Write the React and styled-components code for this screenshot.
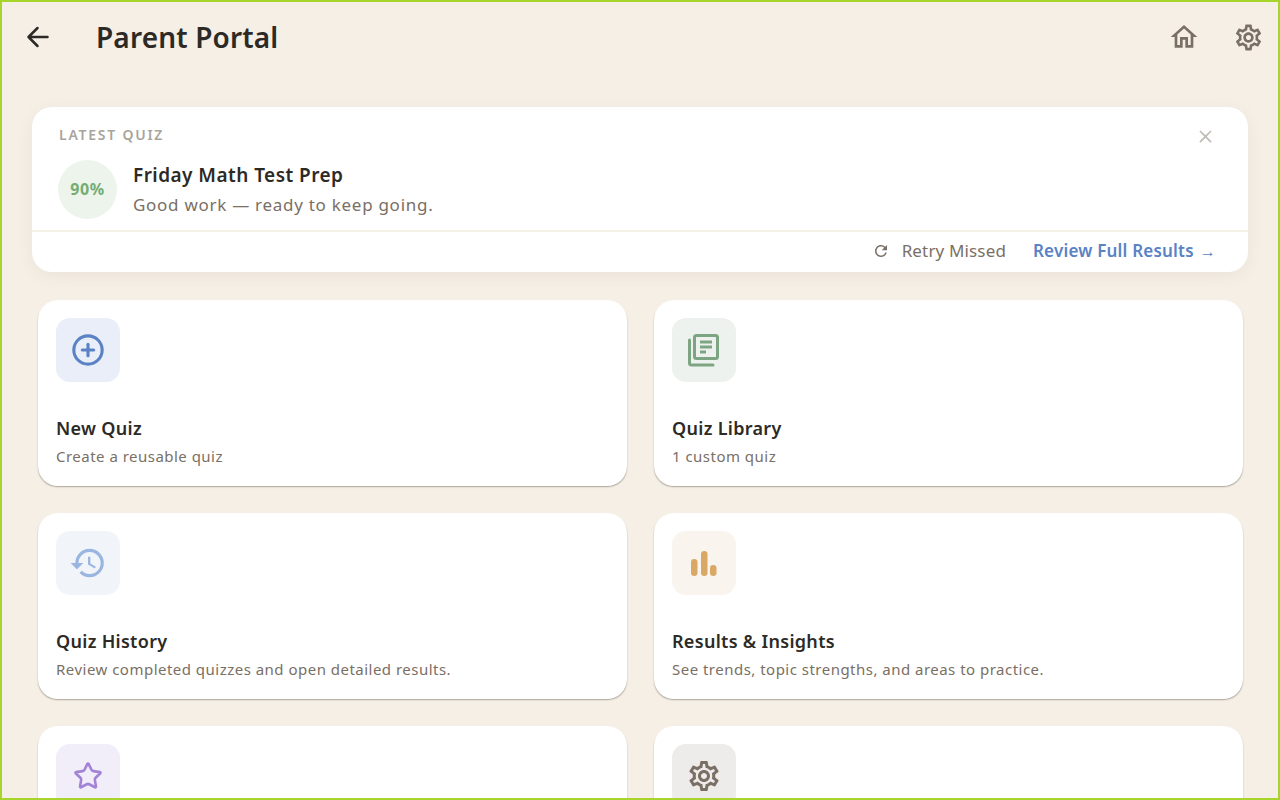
import styled, { createGlobalStyle } from 'styled-components'
import { CirclePlus, Star } from 'lucide-react'
import { MdOutlineHome, MdOutlineSettings, MdClose, MdRefresh, MdHistory } from 'react-icons/md'

const GlobalStyle = createGlobalStyle`
  html, body {
    margin: 0;
    padding: 0;
    background: #f5efe6;
    font-family: 'Noto Sans', 'Lato', sans-serif;
  }
`

const Frame = styled.div`
  box-sizing: border-box;
  height: 800px;
  border: 2px solid #a8d52b;
  background: #f5efe6;
  overflow: hidden;
`

const Header = styled.header`
  display: flex;
  align-items: center;
  height: 70px;
  padding: 0 14px 0 20px;
`

const HeaderButton = styled.button`
  display: flex;
  align-items: center;
  justify-content: center;
  width: 32px;
  height: 32px;
  padding: 0;
  border: 0;
  background: none;
  color: ${(props) => props.$color || '#7a6f65'};
  margin-left: ${(props) => props.$gap || 0}px;
`

const Title = styled.h1`
  flex: 1;
  margin: 0 0 0 42px;
  font-size: 28px;
  font-weight: 600;
  line-height: 38px;
  letter-spacing: 0.15px;
  color: #2d2a26;
`

const Content = styled.main`
  padding: 35px 30px 0;
`

const Banner = styled.section`
  background: #fff;
  border-radius: 20px;
  box-shadow: 0 4px 16px rgba(120, 90, 50, 0.07);
  height: 165px;
  display: flex;
  flex-direction: column;
`

const BannerBody = styled.div`
  flex: 1;
  padding: 20px 32px 0 26px;
  border-bottom: 2px solid #f4f1e7;
`

const BannerTop = styled.div`
  display: flex;
  justify-content: space-between;
  align-items: center;
  height: 16px;
`

const Eyebrow = styled.span`
  margin: 0 0 2px 1px;
  font-size: 14px;
  font-weight: 600;
  letter-spacing: 1.75px;
  color: #a9a49b;
`

const CloseButton = styled.button`
  display: flex;
  padding: 0;
  border: 0;
  background: none;
  color: #c0bcb5;
  margin-top: 2px;
`

const Result = styled.div`
  display: flex;
  align-items: center;
  gap: 16px;
  margin-top: 17px;
`

const Score = styled.div`
  box-sizing: border-box;
  display: flex;
  align-items: center;
  justify-content: center;
  width: 59px;
  height: 59px;
  padding-bottom: 2px;
  border-radius: 50%;
  background: #edf4ec;
  color: #74ad72;
  font-size: 16px;
  font-weight: 700;
  letter-spacing: 0.6px;
`

const ResultTitle = styled.div`
  margin-top: -1px;
  font-size: 19px;
  font-weight: 600;
  line-height: 26px;
  letter-spacing: 0.45px;
  color: #2d2a26;
`

const ResultText = styled.div`
  margin-top: 5px;
  font-size: 17px;
  line-height: 24px;
  letter-spacing: 0.72px;
  color: #7a6f65;
`

const BannerActions = styled.div`
  display: flex;
  align-items: center;
  justify-content: flex-end;
  height: 40px;
  padding: 0 32px 3px 0;
  box-sizing: border-box;
`

const RetryAction = styled.span`
  display: flex;
  align-items: center;
  gap: 12px;
  font-size: 17px;
  letter-spacing: 0.15px;
  color: #7a6f65;
`

const ReviewAction = styled.span`
  display: flex;
  align-items: center;
  margin-left: 27px;
  font-size: 17px;
  font-weight: 600;
  letter-spacing: 0.2px;
  color: #5a82c5;
`

const ArrowGlyph = styled.span`
  margin: 3px 0 0 6px;
  font-family: 'Liberation Sans', sans-serif;
  font-size: 16px;
  font-weight: 400;
`

const Grid = styled.div`
  display: grid;
  grid-template-columns: 589px 589px;
  gap: 27px;
  margin: 28px 0 0 6px;
`

const Card = styled.article`
  box-sizing: border-box;
  height: 186px;
  padding: 18px;
  background: #fff;
  border-radius: 20px;
  box-shadow: 0 1.5px 1.5px -0.5px rgba(60, 50, 40, 0.4);
`

const IconTile = styled.div`
  display: flex;
  align-items: center;
  justify-content: center;
  width: 64px;
  height: 64px;
  border-radius: 14px;
  background: ${(props) => props.$bg};
  color: ${(props) => props.$color};
`

const CardTitle = styled.div`
  margin-top: 33px;
  font-size: 18px;
  font-weight: 600;
  line-height: 26px;
  letter-spacing: 0.3px;
  color: #2d2a26;
`

const CardText = styled.div`
  margin-top: 5px;
  font-size: 15px;
  line-height: 20px;
  letter-spacing: 0.48px;
  color: #7a6f65;
`

const BackIcon = () => (
  <svg width="32" height="32" viewBox="0 0 32 32" fill="none" stroke="currentColor" strokeWidth="2.5" strokeLinecap="round" strokeLinejoin="round">
    <path d="M6.5 16h19M15.5 7 6.5 16l9 9" />
  </svg>
)

const LibraryIcon = () => (
  <svg width="38" height="38" viewBox="0 0 38 38" fill="none" stroke="currentColor" strokeWidth="3" strokeLinecap="round" strokeLinejoin="round">
    <rect x="9.5" y="4.5" width="23" height="23" rx="2" />
    <path d="M4.5 9v23a2 2 0 0 0 2 2H28" />
    <path d="M15 11h12M15 16h12M15 21h6" strokeLinecap="butt" />
  </svg>
)

const BarsIcon = () => (
  <svg width="38" height="38" viewBox="0 0 38 38" fill="currentColor">
    <rect x="6" y="15" width="6.5" height="17" rx="3.25" />
    <rect x="16" y="7" width="6.5" height="25" rx="3.25" />
    <rect x="25" y="21" width="6.5" height="11" rx="3.25" />
  </svg>
)

const cards = [
  { id: 'new', title: 'New Quiz', text: 'Create a reusable quiz', bg: '#e9eef8', color: '#5a82c5', icon: <CirclePlus size={34} strokeWidth={2.2} /> },
  { id: 'library', title: 'Quiz Library', text: '1 custom quiz', bg: '#edf2ee', color: '#7da581', icon: <LibraryIcon /> },
  { id: 'history', title: 'Quiz History', text: 'Review completed quizzes and open detailed results.', bg: '#f1f5fa', color: '#9ab6e0', icon: <MdHistory size={38} /> },
  { id: 'results', title: 'Results & Insights', text: 'See trends, topic strengths, and areas to practice.', bg: '#f9f4ed', color: '#d9a865', icon: <BarsIcon /> },
  { id: 'starred', bg: '#f1edf9', color: '#a283d6', icon: <Star size={30} strokeWidth={2.1} /> },
  { id: 'settings', bg: '#eeecea', color: '#7a6f65', icon: <MdOutlineSettings size={36} /> }
]

export default function App() {
  return (
    <Frame>
      <GlobalStyle />
      <Header>
        <HeaderButton $color="#2d2a26"><BackIcon /></HeaderButton>
        <Title>Parent Portal</Title>
        <HeaderButton><MdOutlineHome size={32} /></HeaderButton>
        <HeaderButton $gap={32}><MdOutlineSettings size={31} /></HeaderButton>
      </Header>
      <Content>
        <Banner>
          <BannerBody>
            <BannerTop>
              <Eyebrow>LATEST QUIZ</Eyebrow>
              <CloseButton><MdClose size={21} /></CloseButton>
            </BannerTop>
            <Result>
              <Score>90%</Score>
              <div>
                <ResultTitle>Friday Math Test Prep</ResultTitle>
                <ResultText>Good work — ready to keep going.</ResultText>
              </div>
            </Result>
          </BannerBody>
          <BannerActions>
            <RetryAction><MdRefresh size={18} />Retry Missed</RetryAction>
            <ReviewAction>Review Full Results<ArrowGlyph>→</ArrowGlyph></ReviewAction>
          </BannerActions>
        </Banner>
        <Grid>
          {cards.map((card) => (
            <Card key={card.id}>
              <IconTile $bg={card.bg} $color={card.color}>{card.icon}</IconTile>
              {card.title && <CardTitle>{card.title}</CardTitle>}
              {card.text && <CardText>{card.text}</CardText>}
            </Card>
          ))}
        </Grid>
      </Content>
    </Frame>
  )
}
